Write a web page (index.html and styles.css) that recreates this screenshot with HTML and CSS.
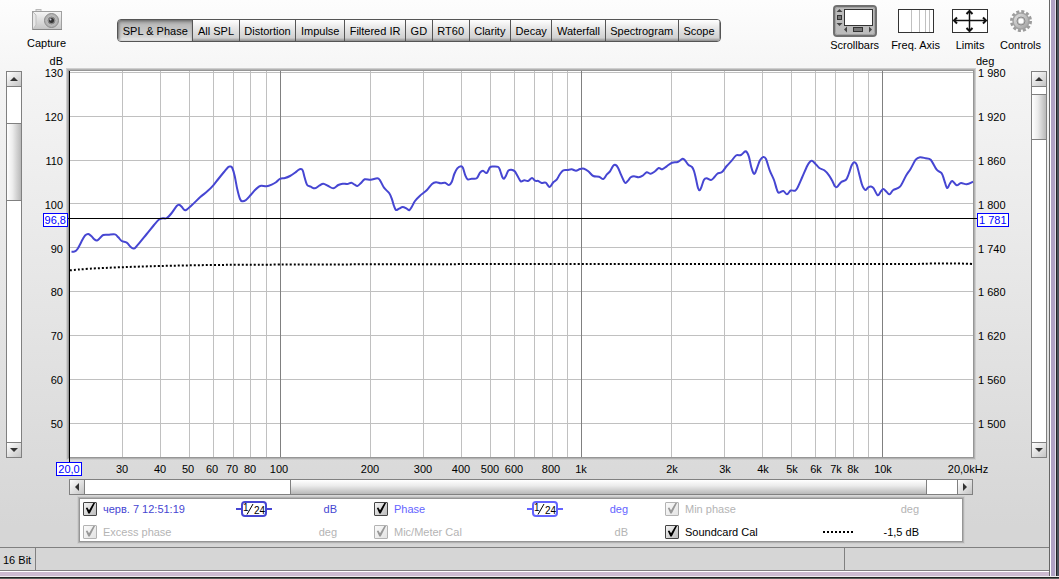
FILE: index.html
```html
<!DOCTYPE html>
<html lang="en">
<head>
  <meta charset="utf-8" />
  <meta name="viewport" content="width=device-width, initial-scale=1" />
  <title>SPL &amp; Phase</title>
  <link rel="stylesheet" href="styles.css">
</head>
<body>
  <div class="window">
    <header class="toolbar">
      <button class="tool capture">
        <svg width="30" height="22" viewBox="0 0 30 22">
          <defs>
            <linearGradient id="cam" x1="0" y1="0" x2="0" y2="1">
              <stop offset="0" stop-color="#f6f6f6" />
              <stop offset="1" stop-color="#c4c4c4" />
            </linearGradient>
          </defs>
          <rect x="4" y="0.500" width="5" height="3" fill="#e4e4e4" stroke="#b8b8b8" />
          <rect x="0.500" y="2.500" width="29" height="18" fill="url(#cam)" stroke="#a0a0a0" />
          <path d="M1 3 L4 6 V16 L1 20" fill="#e8e8e8" stroke="#c0c0c0" />
          <path d="M1 20.500 H30" stroke="#888" />
          <circle cx="19.500" cy="11.500" r="7" fill="#b4b4b4" stroke="#8a8a8a" />
          <circle cx="19.500" cy="11.500" r="4.500" fill="#888" stroke="#c4c4c4" />
          <circle cx="19.500" cy="11.500" r="2.500" fill="#333" />
          <circle cx="18.500" cy="10.500" r="1" fill="#c8c8d8" />
        </svg>
        <span>Capture</span>
      </button>

      <nav class="tabs">
        <button class="active">SPL &amp; Phase</button>
        <button>All SPL</button>
        <button>Distortion</button>
        <button>Impulse</button>
        <button>Filtered IR</button>
        <button>GD</button>
        <button>RT60</button>
        <button>Clarity</button>
        <button>Decay</button>
        <button>Waterfall</button>
        <button>Spectrogram</button>
        <button>Scope</button>
      </nav>

      <div class="tools">
        <button class="tool">
          <svg width="44" height="32" viewBox="0 0 44 32">
            <rect x="1" y="1" width="42" height="30" rx="3" fill="#bcbcbc" stroke="#707070" stroke-width="2" />
            <rect x="2.500" y="2.500" width="39" height="27" rx="2" fill="none" stroke="#a2a2a2" />
            <rect x="11.500" y="4.500" width="28" height="16" fill="#fff" stroke="#333" />
            <path d="M3.500 7 L6.500 4 L9.500 7 Z M3.500 18 L6.500 21 L9.500 18 Z M14 21.500 L11 24.500 L14 27.500 Z M36 21.500 L39 24.500 L36 27.500 Z" fill="#444" />
            <rect x="4.500" y="10.500" width="4" height="4" fill="#777" stroke="#333" />
            <rect x="20.500" y="22.500" width="9" height="4" fill="#777" stroke="#333" />
          </svg>
          <span>Scrollbars</span>
        </button>
        <button class="tool">
          <svg width="36" height="32" viewBox="0 0 36 32">
            <rect x="0.500" y="4.500" width="35" height="23" fill="#fff" stroke="#333" />
            <path d="M13.500 5 V27 M21.500 5 V27 M27.500 5 V27 M31.500 5 V27" stroke="#c0c0c0" />
          </svg>
          <span>Freq. Axis</span>
        </button>
        <button class="tool">
          <svg width="36" height="32" viewBox="0 0 36 32">
            <rect x="0.500" y="4.500" width="35" height="23" fill="#fff" stroke="#333" />
            <path d="M2 15.500 H34 M17.500 6 V26" stroke="#111" stroke-width="1.500" />
            <path d="M5 12.500 L2 15.500 L5 18.500 M31 12.500 L34 15.500 L31 18.500 M14.500 9 L17.500 6 L20.500 9 M14.500 23 L17.500 26 L20.500 23" fill="none" stroke="#111" stroke-width="2" />
          </svg>
          <span>Limits</span>
        </button>
        <button class="tool">
          <svg width="24" height="32" viewBox="0 0 24 32">
            <defs>
              <linearGradient id="gear" x1="0" y1="0" x2="1" y2="1">
                <stop offset="0" stop-color="#e2e2e2" />
                <stop offset="1" stop-color="#a0a0a0" />
              </linearGradient>
            </defs>
            <circle cx="12" cy="16" r="9.500" fill="none" stroke="#9c9c9c" stroke-width="3" stroke-dasharray="3 1.970" />
            <circle cx="12" cy="16" r="8" fill="url(#gear)" stroke="#a2a2a2" stroke-width="1.500" />
            <circle cx="12" cy="16" r="4" fill="#c4c4c4" stroke="#8c8c8c" />
            <circle cx="12" cy="16" r="2.500" fill="#fff" />
          </svg>
          <span>Controls</span>
        </button>
      </div>
    </header>

    <main class="chart">
      <span class="unit unit-left">dB</span>
      <span class="unit unit-right">deg</span>

      <div class="vscroll vscroll-left">
        <button class="arrow up" aria-label="Scroll up"></button>
        <div class="track"><div class="thumb"></div></div>
        <button class="arrow down" aria-label="Scroll down"></button>
      </div>

      <div class="axis axis-left">
        <ul>
          <li>130</li>
          <li>120</li>
          <li>110</li>
          <li>100</li>
          <li>90</li>
          <li>80</li>
          <li>70</li>
          <li>60</li>
          <li>50</li>
        </ul>
        <span class="marker">96,8</span>
      </div>

      <div class="plot">
        <svg id="graph" viewBox="69 71 904 386" preserveAspectRatio="none">
          <g id="grid"></g>
          <path id="soundcard" class="soundcard" />
          <path id="spl" class="spl" />
          <path class="cursor" d="M66 218.500 H977 M69.500 71 V462" />
        </svg>
      </div>

      <div class="axis axis-right">
        <ul>
          <li>1 980</li>
          <li>1 920</li>
          <li>1 860</li>
          <li>1 800</li>
          <li>1 740</li>
          <li>1 680</li>
          <li>1 620</li>
          <li>1 560</li>
          <li>1 500</li>
        </ul>
        <span class="marker">1 781</span>
      </div>

      <div class="vscroll vscroll-right">
        <button class="arrow up" aria-label="Scroll up"></button>
        <div class="track"><div class="thumb"></div></div>
        <button class="arrow down" aria-label="Scroll down"></button>
      </div>

      <ul class="freqs">
        <li><span class="start">20,0</span></li>
        <li><span>30</span></li>
        <li><span>40</span></li>
        <li><span>50</span></li>
        <li><span>60</span></li>
        <li><span>70</span></li>
        <li><span>80</span></li>
        <li><span>100</span></li>
        <li><span>200</span></li>
        <li><span>300</span></li>
        <li><span>400</span></li>
        <li><span>500</span></li>
        <li><span>600</span></li>
        <li><span>800</span></li>
        <li><span>1k</span></li>
        <li><span>2k</span></li>
        <li><span>3k</span></li>
        <li><span>4k</span></li>
        <li><span>5k</span></li>
        <li><span>6k</span></li>
        <li><span>7k</span></li>
        <li><span>8k</span></li>
        <li><span>10k</span></li>
        <li><span>20,0kHz</span></li>
      </ul>

      <div class="hscroll">
        <button class="arrow left" aria-label="Scroll left"></button>
        <div class="track"><div class="thumb"></div></div>
        <button class="arrow right" aria-label="Scroll right"></button>
      </div>
    </main>

    <section class="legend">
      <div class="trace trace-spl">
        <input type="checkbox" id="t-spl" checked />
        <label for="t-spl">черв. 7 12:51:19</label>
        <svg class="smooth" width="36" height="16" viewBox="0 0 36 16">
          <path d="M0 8 H5 M31 8 H36" stroke="currentColor" stroke-width="2" />
          <rect x="6" y="1" width="24" height="14" rx="3" fill="#fff" stroke="currentColor" stroke-width="2" />
          <path d="M11 13.500 L17 3" stroke="#000" />
          <text x="7" y="10">1</text>
          <text x="18" y="13">24</text>
        </svg>
        <span class="value">dB</span>
      </div>
      <div class="trace trace-phase">
        <input type="checkbox" id="t-phase" checked />
        <label for="t-phase">Phase</label>
        <svg class="smooth" width="36" height="16" viewBox="0 0 36 16">
          <path d="M0 8 H5 M31 8 H36" stroke="currentColor" stroke-width="2" />
          <rect x="6" y="1" width="24" height="14" rx="3" fill="#fff" stroke="currentColor" stroke-width="2" />
          <path d="M11 13.500 L17 3" stroke="#000" />
          <text x="7" y="10">1</text>
          <text x="18" y="13">24</text>
        </svg>
        <span class="value">deg</span>
      </div>
      <div class="trace off">
        <input type="checkbox" id="t-min" checked disabled />
        <label for="t-min">Min phase</label>
        <span class="value">deg</span>
      </div>
      <div class="trace off">
        <input type="checkbox" id="t-excess" checked disabled />
        <label for="t-excess">Excess phase</label>
        <span class="value">deg</span>
      </div>
      <div class="trace off">
        <input type="checkbox" id="t-mic" checked disabled />
        <label for="t-mic">Mic/Meter Cal</label>
        <span class="value">dB</span>
      </div>
      <div class="trace">
        <input type="checkbox" id="t-card" checked />
        <label for="t-card">Soundcard Cal</label>
        <svg width="32" height="2" viewBox="0 0 32 2">
          <path d="M1 1 H32" stroke="#000" stroke-width="2" stroke-dasharray="2 2" />
        </svg>
        <span class="value">-1,5 dB</span>
      </div>
    </section>

    <footer class="status">
      <span>16 Bit</span>
      <span></span>
      <span></span>
    </footer>
  </div>

  <script>
    const splPoints = [
      [71.5,251.7],[74,251.7],[77.3,249.3],[82.7,239.3],[85.3,235.3],[88.3,234],[91.3,236],[94.3,239.3],[97,240.5],
      [100,238],[103.3,235],[108.3,234.7],[115,234.4],[118.3,237.3],[121.7,241],[126.7,242.7],[130.7,247],[133.3,248.5],
      [136,247],[146.7,234],[154,225],[159.3,219.3],[162.7,218.3],[166.7,218],[171.7,213],[176.7,206],[179,204.8],
      [181.7,206.7],[183.7,209.3],[186,210],[191.7,205.3],[200,197.3],[207.3,191.3],[213.3,185.3],[218.3,179],[224,172],
      [228.3,167],[230.3,166.5],[232.3,168],[234.7,176],[237.3,189.3],[240,199],[242.3,201.3],[246,200],[250.7,195],
      [255,190],[259.3,186.3],[261.7,185.7],[266.7,186.3],[271.7,184.7],[276,182.3],[280,178.9],[285,178],[290,176],
      [295,172.7],[298.3,170],[300.7,169],[302.7,170.3],[304.7,177.7],[307,184.7],[310.7,186.7],[315,188.3],[319.3,185.7],
      [323.3,183.7],[328.3,186],[333.3,188.3],[338.3,185],[342.7,183.7],[347.3,184],[351.3,182.7],[354.7,184.7],[357.3,186],
      [360.7,183.3],[364.7,179.3],[370.7,179.7],[377.3,178.3],[380,180.3],[384,187.7],[389.3,193.3],[392,199.3],[394,206],
      [396,210],[399,208.7],[402.7,207],[406.7,208.7],[409.3,210.3],[411.7,207],[415,201],[420,195.7],[426.7,190.3],
      [432,184],[436,182.3],[440.7,183.3],[445,182.7],[449,185],[451.7,182],[454.3,174],[457.3,168.3],[461,166.3],
      [463,168],[465.3,175.3],[467.7,179.3],[471.7,178.7],[476.7,178.3],[480,172.7],[483,170.7],[486.7,173],[490,167.3],
      [493.3,166.5],[498.3,167],[500.3,171],[502.3,177],[504,178.7],[506,175.7],[508.3,170.7],[511.3,169.7],[514.7,171.3],
      [517.7,176.3],[520.7,181.3],[524.3,180.3],[528,181],[532,178],[535,180.7],[538.3,181],[541.7,183],[545.7,182.7],
      [549.7,187],[553.3,182.3],[556.7,179.7],[560,174],[563.3,170.3],[567.3,170],[571.7,169.3],[576,170.7],[580,169],
      [584,168.7],[588.3,171.3],[593.3,176],[599,176.7],[603.3,179],[606.7,174.7],[610,171.3],[613.3,165.7],[615.7,165],
      [618,167.7],[621,174.7],[624,181.3],[625.7,183],[628.3,180.3],[630.7,177.3],[634,176.3],[638.7,177.3],[642.7,175.7],
      [646.7,172.3],[650.7,173.7],[655,171.3],[658.7,168],[662.3,169.3],[666.7,166.3],[672,162.7],[677.7,162],[682.7,158.7],
      [685.3,160.7],[688.3,164.7],[692,167],[694,171],[696,179],[698,188],[699.7,190.3],[701.3,187.3],[704,179.7],
      [706.7,178.3],[711,180],[714.3,177.3],[717.3,173.7],[722,172],[726.7,166],[731.7,160.7],[736,155.5],[741,155],
      [745,151.5],[747,152.3],[749,157],[751.3,167.3],[753.3,173],[755,173.3],[757.3,167.3],[760,160.3],[763.3,157],
      [766,159],[769.7,170.3],[774,180],[776.7,189],[778.7,192.7],[783.3,191],[787,194.3],[790.7,190.5],[795.3,190.7],
      [798,186.7],[802.3,177],[807.3,165.7],[810,161.7],[812.3,160.9],[815.3,163.7],[819.3,168],[824.3,170.3],[829,175.3],
      [832.7,181.7],[834.7,186],[837,187],[841.3,182],[846,179.7],[848.7,174],[851.7,165.3],[854.3,162.3],[856.7,164.7],
      [859,173.3],[861.7,183.7],[863.7,188.3],[865.7,190],[868.3,187.3],[871,186.5],[873.7,188.3],[877.7,195.3],[880.7,191.7],
      [883.3,189],[886.7,192],[889.7,194.3],[893.3,190],[900,186.7],[906,175.7],[910.7,168.7],[915.7,159.7],[920,157.2],
      [925.7,158.3],[930.7,159.7],[936.7,169.7],[941.7,173.3],[944.3,180.3],[947,188],[949.7,184],[952.3,180.9],
      [956.7,185.3],[961,182.9],[966.7,184.3],[973,181.7]
    ];
    const cardPoints = [
      [70,270.3],[90,268.7],[122,267.2],[160,266],[213,265],[280,264.6],[420,264.2],[560,264],[760,264],[900,264],
      [930,263.6],[955,263.4],[973,264]
    ];

    // Catmull-Rom through the points, as cubic beziers
    function smoothPath(p) {
      let d = `M${p[0][0]} ${p[0][1]}`;
      for (let i = 0; i < p.length - 1; i++) {
        const a = p[i - 1] || p[i];
        const b = p[i];
        const c = p[i + 1];
        const e = p[i + 2] || c;
        d += ` C${b[0] + (c[0] - a[0]) / 6} ${b[1] + (c[1] - a[1]) / 6}`;
        d += ` ${c[0] - (e[0] - b[0]) / 6} ${c[1] - (e[1] - b[1]) / 6} ${c[0]} ${c[1]}`;
      }
      return d;
    }

    function addLine(d, cls) {
      const line = document.createElementNS("http://www.w3.org/2000/svg", "path");
      line.setAttribute("d", d);
      line.setAttribute("class", cls);
      document.getElementById("grid").appendChild(line);
    }

    // dB lines, 130 down to 50
    for (let db = 130; db >= 50; db -= 10) {
      const y = Math.floor(72.4 + (130 - db) * 4.385) + 0.5;
      addLine(`M69 ${y} H973`, "minor");
    }

    // frequency lines, log scale from 20 Hz
    const major = [];
    for (let decade = 10; decade <= 10000; decade *= 10) {
      for (let n = 1; n < 10; n++) {
        const f = n * decade;
        if (f <= 20 || f >= 20000) continue;
        const x = Math.floor(69.5 + 301.2 * Math.log10(f / 20)) + 0.5;
        if (n === 1) major.push(x);
        else addLine(`M${x} 71 V457`, "minor");
      }
    }
    major.forEach((x) => addLine(`M${x} 71 V457`, "major"));

    document.getElementById("spl").setAttribute("d", smoothPath(splPoints));
    document.getElementById("soundcard").setAttribute("d", smoothPath(cardPoints));
  </script>
</body>
</html>
```
FILE: styles.css
```css
* {
  box-sizing: border-box;
}
body {
  margin: 0;
  background: #434a54;
  color: #000;
  font: 11px/14px "Liberation Sans", Arial, sans-serif;
}
ul {
  list-style: none;
  margin: 0;
  padding: 0;
}
button {
  margin: 0;
  padding: 0;
  border: none;
  background: none;
  color: inherit;
  font: inherit;
}
svg {
  display: block;
}
.window {
  display: flex;
  flex-direction: column;
  height: 100vh;
  min-height: 400px;
  padding: 0 10px 8px 0;
  background:
    linear-gradient(#fdfdfd, #f4f4f4 15%, #d6d6d6 92%) no-repeat 0 0 / calc(100% - 10px) calc(100% - 8px),
    linear-gradient(90deg, #666 1px, #fff 1px 2px, #b0a2c4 2px 6px, #e4deec 6px 7px, #222 7px 8px, #4c545e 8px) no-repeat 100% 0 / 10px calc(100% - 3px),
    linear-gradient(#fff 1px, #cdbbd1 1px 5px, #eee 5px 6px, #222 6px 7px, #59605c 7px) no-repeat 0 100% / 100% 8px;
}

/* toolbar */
.toolbar {
  display: flex;
  align-items: flex-start;
  height: 52px;
  padding: 0 8px 0 27px;
}
.tool {
  display: flex;
  flex-direction: column;
  align-items: center;
  gap: 1px;
}
.capture {
  gap: 5px;
  padding-top: 9px;
}
.tabs {
  display: flex;
  flex: 0 1 604px;
  height: 23px;
  margin: 19px auto 0 51px;
  border: 1px solid #555;
  border-radius: 4px;
  overflow: hidden;
}
.tabs button {
  flex: auto;
  padding: 0 4px;
  border-right: 1px solid #555;
  background: linear-gradient(#fff, #ececec 30%, #d0d0d0 85%, #8c8c8c);
  white-space: nowrap;
}
.tabs button:last-child {
  border-right: 1px solid #999;
}
.tabs .active {
  background: linear-gradient(#a0a0a0, #bcbcbc 25%, #d4d4d4 80%, #eee);
  box-shadow: inset 1px 1px 3px #666;
}
.tools {
  display: flex;
  gap: 12px;
  padding-top: 5px;
}

/* chart area */
.chart {
  flex: 1;
  min-height: 0;
  display: grid;
  grid-template-columns: 16px 44px minmax(0, 1fr) 55px 16px;
  grid-template-rows: 16px minmax(0, 1fr) 19px 16px;
  padding: 0 2px 0 6px;
}
.unit {
  grid-row: 1;
  padding-top: 2px;
}
.unit-left {
  grid-column: 2;
  padding-right: 3px;
  text-align: right;
}
.unit-right {
  grid-column: 4;
}
.axis {
  grid-row: 2;
  position: relative;
  padding-bottom: 29px;
}
.axis ul {
  display: flex;
  flex-direction: column;
  justify-content: space-between;
  height: calc(100% + 2px);
  margin-top: -2px;
}
.axis-left {
  grid-column: 2;
  padding-right: 3px;
  text-align: right;
}
.axis-right {
  grid-column: 4;
  padding-left: 2px;
}
.marker,
.freqs .start {
  border: 1px solid #00f;
  background: #fff;
  color: #00f;
  line-height: 12px;
  padding: 0 1px;
}
.marker {
  position: absolute;
  top: 37%;
  z-index: 1;
}
.axis-left .marker {
  right: -2px;
}
.axis-right .marker {
  left: 1px;
}
.plot {
  grid-row: 2;
  grid-column: 3;
  margin: 3px;
  background: #fff;
  box-shadow: 0 0 0 1px #969696, 0 0 0 2px #b2b2b2, 0 0 0 3px #cecece;
}
.plot svg {
  width: 100%;
  height: 100%;
  overflow: visible;
}
.plot path {
  fill: none;
  stroke-width: 1px;
  vector-effect: non-scaling-stroke;
}
.plot .minor {
  stroke: #c0c0c0;
}
.plot .major {
  stroke: #808080;
}
.plot .cursor {
  stroke: #000;
}
.plot .spl {
  stroke: #4646d2;
  stroke-width: 2px;
}
.plot .soundcard {
  stroke: #000;
  stroke-width: 2px;
  stroke-dasharray: 2 2;
}

/* one column per interval between labelled frequencies */
.freqs {
  grid-row: 3;
  grid-column: 3;
  display: grid;
  grid-template-columns: 53fr 38fr 28fr 24fr 20fr 18fr 29fr 91fr 53fr 38fr 29fr 24fr 37fr 30fr 91fr 53fr 38fr 29fr 24fr 20fr 17fr 30fr 85fr 5fr;
  align-items: start;
  margin: 0 3px;
  padding-top: 2px;
}
.freqs li {
  display: flex;
  justify-content: center;
  width: 0;
  white-space: nowrap;
}
.freqs span {
  flex: none;
}

/* scrollbars */
.vscroll,
.hscroll {
  display: flex;
  border: 1px solid #808080;
  background: #fff;
}
.vscroll {
  grid-row: 2;
  flex-direction: column;
  margin: 3px 0 2px;
}
.vscroll-right {
  grid-column: 5;
}
.hscroll {
  grid-row: 4;
  grid-column: 3;
  margin: 0 3px;
}
.track {
  flex: 1;
  display: flex;
  min-height: 0;
}
.vscroll .track {
  flex-direction: column;
}
.thumb {
  border: solid #808080;
}
.vscroll .thumb {
  border-width: 1px 0;
  background: linear-gradient(90deg, #fff, #ececec 40%, #b8b8b8);
}
.vscroll-left .thumb {
  height: 22%;
  margin-top: 36px;
}
.vscroll-right .thumb {
  height: 13%;
  margin-top: 7px;
}
.hscroll .thumb {
  width: 73%;
  margin-left: auto;
  margin-right: 30px;
  border-width: 0 1px;
  background: linear-gradient(#fff, #ececec 40%, #b8b8b8);
}
.arrow {
  flex: none;
  display: flex;
  align-items: center;
  justify-content: center;
  width: 14px;
  height: 14px;
  background: linear-gradient(135deg, #fff, #c4c4c4);
}
.arrow::before {
  content: "";
  border: 4px solid transparent;
}
.up,
.down {
  height: 15px;
}
.left,
.right {
  width: 15px;
}
.up {
  border-bottom: 1px solid #808080;
}
.up::before {
  border-top: none;
  border-bottom-color: #333;
}
.down {
  border-top: 1px solid #808080;
}
.down::before {
  border-bottom: none;
  border-top-color: #333;
}
.left {
  border-right: 1px solid #808080;
}
.left::before {
  border-left: none;
  border-right-color: #333;
}
.right {
  border-left: 1px solid #808080;
}
.right::before {
  border-right: none;
  border-left-color: #333;
}

/* trace legend */
.legend {
  display: grid;
  grid-template-columns: repeat(3, 1fr);
  grid-auto-rows: 23px;
  align-items: center;
  height: 42px;
  margin: 4px 87px 6px 80px;
  padding: 0 6px 0 3px;
  align-content: center;
  background: #fff;
  box-shadow: 0 0 0 1px #969696, 0 0 0 2px #b2b2b2, 0 0 0 3px #cecece;
}
.trace {
  display: flex;
  align-items: center;
  padding-right: 37px;
}
.trace label {
  flex: 1;
  margin-left: 6px;
}
.trace .value {
  width: 65px;
  text-align: right;
}
.trace-spl {
  color: #4646d2;
}
.trace-phase {
  color: #6464ff;
}
.off {
  color: #b4b4b4;
}
.smooth text {
  font-size: 10px;
  fill: #000;
}
.trace input {
  appearance: none;
  width: 14px;
  height: 14px;
  margin: 0;
  border: 1px solid #444;
  border-radius: 1px;
  background: linear-gradient(135deg, #f4f4f4, #bcbcbc);
}
.trace input:checked::before {
  content: "";
  display: block;
  width: 12px;
  height: 12px;
  background: #000;
  clip-path: polygon(15% 45%, 28% 42%, 42% 65%, 78% 5%, 92% 5%, 48% 92%, 36% 92%);
}
.trace input:disabled {
  opacity: 0.4;
}

/* status bar */
.status {
  display: flex;
  height: 24px;
  border: solid #808080;
  border-width: 1px 0;
  line-height: 24px;
}
.status span {
  border-right: 1px solid #808080;
  padding: 0 4px 0 3px;
}
.status span:nth-child(2) {
  flex: 1;
}
.status span:last-child {
  width: 204px;
  border-right: none;
}
```
